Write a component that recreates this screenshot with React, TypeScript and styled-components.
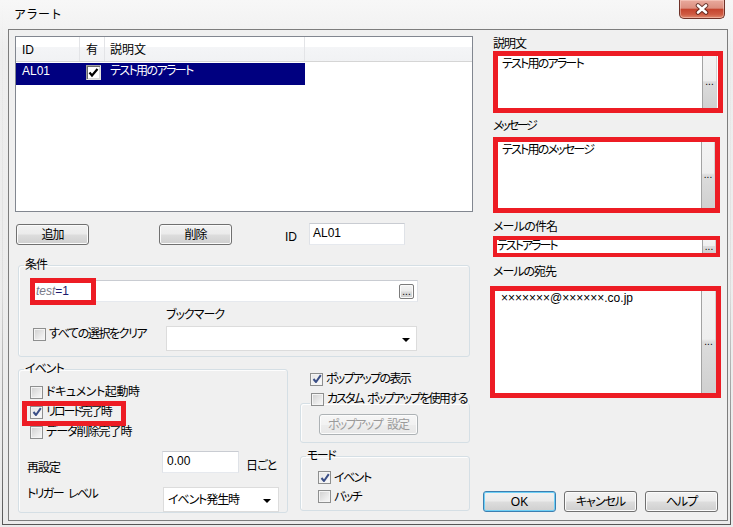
import React from "react";
import styled, { createGlobalStyle } from "styled-components";

const GlobalStyle = createGlobalStyle`
  * { box-sizing: border-box; }
  *::before, *::after { box-sizing: border-box; }
  html, body { margin: 0; padding: 0; }
  body {
    width: 733px; height: 527px; overflow: hidden;
    background: #ececec;
    font-family: "Liberation Sans", "Noto Sans CJK JP", sans-serif;
    font-size: 12px; line-height: 14px; color: #000;
    font-feature-settings: "palt" 1;
    letter-spacing: -1px;
  }
`;

const Window = styled.div`
  width: 733px; height: 527px;
  padding: 0 2px 2px 2px;
  background: linear-gradient(180deg, #f7f7f7 0%, #eeeeee 10%, #ebebeb 100%);
  display: flex;
`;

const Frame = styled.div`
  flex: 1;
  display: flex; flex-direction: column;
  padding: 0 2px 3px 5px;
  border: 1px solid transparent; border-top: 0;
  border-image: linear-gradient(180deg, rgba(90,90,90,0) 0%, rgba(90,90,90,0.1) 55%, rgba(60,60,60,0.85) 100%) 1;
`;

const TitleBar = styled.div`
  height: 29px; flex: 0 0 29px;
  display: flex; justify-content: space-between; align-items: flex-start;
`;

const TitleText = styled.div`
  padding: 7px 0 0 6px;
  font-family: "Noto Sans CJK JP", sans-serif;
  font-feature-settings: normal;
  letter-spacing: 0;
  font-size: 12px; line-height: 14px; color: #000;
`;

const CloseButton = styled.div`
  width: 46px; height: 19px; margin-right: 3px;
  border: 1px solid #6e3229; border-top: 0;
  border-radius: 0 0 5px 5px;
  background: linear-gradient(180deg, #e9aa9d 0%, #dc8f80 45%, #c5452f 52%, #cf5b43 80%, #e08a6e 100%);
  box-shadow: inset 0 0 0 1px rgba(255, 220, 210, 0.45);
  display: flex; align-items: center; justify-content: center;
`;

const Client = styled.div`
  height: 492px;
  border: 1px solid #7d7d7d;
  background: #f0f0f0;
  display: flex;
`;

const LeftCol = styled.div`
  width: 464px; flex: 0 0 464px;
  padding: 6px 0 0 6px;
  display: flex; flex-direction: column;
`;

const RightCol = styled.div`
  width: 244px; flex: 0 0 244px;
  margin-left: 10px;
  padding: 7px 0 8px 10px;
  display: flex; flex-direction: column;
`;

const Txt = styled.span<{ $ls?: number }>`
  letter-spacing: ${(p) => p.$ls ?? -1}px;
  white-space: pre;
`;

const Latin = styled.span`
  font-family: "Liberation Sans", sans-serif;
  letter-spacing: 0;
`;

/* ---------- list view ---------- */
const ListView = styled.div`
  height: 176px; flex: 0 0 176px;
  border: 1px solid #828790;
  background: #fff;
`;

const ListHeader = styled.div`
  display: grid;
  grid-template-columns: 64px 25px 200px 1fr;
  height: 25px;
  border-bottom: 1px solid #d5d5d5;
  background: linear-gradient(180deg, #ffffff 0%, #ffffff 42%, #f4f5f7 42%, #f1f2f4 100%);
`;

const HeaderCell = styled.div<{ $pl: number; $last?: boolean }>`
  padding-left: ${(p) => p.$pl}px;
  padding-top: 2px;
  display: flex; align-items: center;
  border-right: ${(p) => (p.$last ? "0" : "1px solid #e3e4e7")};
  letter-spacing: 0;
`;

const ListRow = styled.div`
  display: grid;
  grid-template-columns: 64px 25px 200px 1fr;
  height: 22px;
  margin-top: 1px;
`;

const RowCell = styled.div<{ $pl: number; $selected?: boolean }>`
  padding-left: ${(p) => p.$pl}px;
  padding-top: 1px;
  background: ${(p) => (p.$selected ? "#000080" : "transparent")};
  color: ${(p) => (p.$selected ? "#fff" : "#000")};
  display: flex; align-items: flex-start;
`;

const ClassicCheck = styled.div`
  width: 15px; height: 15px; margin-top: 1px;
  background: #fff;
  border: 1px solid;
  border-color: #a0a0a0 #e3e3e3 #e3e3e3 #a0a0a0;
  box-shadow: inset 1px 1px 0 #696969, inset -1px -1px 0 #d8d8d8;
  display: flex; align-items: center; justify-content: center;
`;

/* ---------- controls ---------- */
const PushButton = styled.button<{ $w?: number; $h?: number; $ml?: number; $mt?: number; $focus?: boolean }>`
  width: ${(p) => p.$w ?? 73}px;
  height: ${(p) => p.$h ?? 21}px;
  margin: ${(p) => p.$mt ?? 0}px 0 0 ${(p) => p.$ml ?? 0}px;
  padding: 0;
  flex: 0 0 auto;
  border: 1px solid ${(p) => (p.$focus ? "#3c7fb1" : "#707070")};
  border-radius: 3px;
  background: linear-gradient(180deg, #f2f2f2 0%, #ebebeb 48%, #dddddd 52%, #cfcfcf 100%);
  box-shadow: inset 0 0 0 1px ${(p) => (p.$focus ? "#6fd0f6" : "#fbfbfb")};
  font: inherit; color: #000;
  letter-spacing: -1px;
  display: flex; align-items: center; justify-content: center;
`;

const DisabledButton = styled(PushButton)`
  border-color: #adb2b5;
  background: linear-gradient(180deg, #f6f6f6 0%, #f2f2f2 50%, #ececec 52%, #e8e8e8 100%);
  box-shadow: inset 0 0 0 1px #fcfcfc;
  color: #9a9a9a;
`;

const TextBox = styled.div<{ $w: number; $h?: number; $pl?: number }>`
  width: ${(p) => p.$w}px;
  height: ${(p) => p.$h ?? 22}px;
  flex: 0 0 auto;
  padding: 2px 0 0 ${(p) => p.$pl ?? 3}px;
  background: #fff;
  border: 1px solid;
  border-color: #c9ccd2 #dfe2e7 #e6e9ee #dfe2e7;
  color: #000;
  letter-spacing: 0;
`;

const ComboBox = styled.div<{ $w: number; $h: number; $ar: number }>`
  width: ${(p) => p.$w}px;
  height: ${(p) => p.$h}px;
  flex: 0 0 auto;
  padding: 0 ${(p) => p.$ar}px 0 4px;
  background: #fff;
  border: 1px solid #dcdcdc;
  display: flex; align-items: center; justify-content: space-between;
`;

const ComboArrow = styled.span`
  width: 0; height: 0;
  margin-top: 3px;
  border-left: 4px solid transparent;
  border-right: 4px solid transparent;
  border-top: 4px solid #000;
`;

const CheckBoxBox = styled.span<{ $checked?: boolean }>`
  width: 13px; height: 13px; flex: 0 0 13px;
  border: 1px solid #8e8f8f;
  background: ${(p) =>
    p.$checked
      ? "linear-gradient(135deg, #e6e6e6 0%, #fbfbfb 100%)"
      : "linear-gradient(135deg, #cfcfcf 0%, #eeeeee 70%, #f7f7f7 100%)"};
  box-shadow: inset 0 0 0 1px #f4f4f4;
  display: inline-flex; align-items: center; justify-content: center;
`;

const CheckRow = styled.div<{ $h?: number; $ml?: number }>`
  height: ${(p) => p.$h ?? 14}px;
  margin-left: ${(p) => p.$ml ?? 0}px;
  display: flex; align-items: center; gap: 3px;
  white-space: nowrap;
`;

const Check = ({ checked }: { checked?: boolean }) => (
  <CheckBoxBox $checked={checked}>
    {checked && (
      <svg width="10" height="10" viewBox="0 0 10 10">
        <path d="M1.5 5 L4 8 L8.8 1.2" fill="none" stroke="#3a4e86" strokeWidth="2" strokeLinejoin="round" />
      </svg>
    )}
  </CheckBoxBox>
);

const Marked = styled.div<{ $t: number; $l: number; $w: number; $h: number; $bw?: number }>`
  position: relative;
  &::after {
    content: "";
    position: absolute;
    top: ${(p) => p.$t}px; left: ${(p) => p.$l}px;
    width: ${(p) => p.$w}px; height: ${(p) => p.$h}px;
    border: ${(p) => p.$bw ?? 5}px solid #ed1c24;
    pointer-events: none;
  }
`;

/* ---------- group boxes ---------- */
const GroupBox = styled.fieldset<{ $w: number; $mt?: number; $ml?: number }>`
  width: ${(p) => p.$w}px;
  flex: 0 0 auto;
  margin: ${(p) => p.$mt ?? 0}px 0 0 ${(p) => p.$ml ?? 0}px;
  padding: 0;
  min-inline-size: 0;
  border: 1px solid #d5dfe5;
  border-radius: 3px;
  box-shadow: inset 1px 1px 0 #fdfdfd;
`;

const Legend = styled.legend<{ $ml: number; $pb?: number }>`
  margin-left: ${(p) => p.$ml}px;
  padding: 0 1px ${(p) => p.$pb ?? 0}px 1px;
  line-height: 14px;
`;

const ButtonRow = styled.div`
  margin-top: 11px;
  display: flex; align-items: flex-start;
`;

const Label = styled.div<{ $w?: number; $ml?: number; $mt?: number }>`
  ${(p) => (p.$w ? `width: ${p.$w}px; flex: 0 0 ${p.$w}px;` : "")}
  margin: ${(p) => p.$mt ?? 0}px 0 0 ${(p) => p.$ml ?? 0}px;
  white-space: nowrap;
  line-height: 14px;
`;

const CondBody = styled.div`
  padding: 8px 0 5px 11px;
`;

const CondInput = styled.div`
  width: 388px; height: 22px;
  padding: 0 3px 0 5px;
  background: #fff;
  border: 1px solid;
  border-color: #c9ccd2 #dfe2e7 #e6e9ee #dfe2e7;
  display: flex; align-items: center; justify-content: space-between;
  font-family: "Liberation Sans", sans-serif;
  letter-spacing: 0;
`;

const Italic = styled.span`
  font-style: italic; color: #7a7a88;
`;

const Navy = styled.span`
  color: #1a1a6e;
`;

const SmallEllipsis = styled.div<{ $w: number; $h: number }>`
  width: ${(p) => p.$w}px; height: ${(p) => p.$h}px;
  border: 1px solid #7b7b7b; border-radius: 2px;
  background: linear-gradient(180deg, #f4f4f4 0%, #ebebeb 48%, #dcdcdc 52%, #cdcdcd 100%);
  box-shadow: inset 0 0 0 1px #fafafa;
  display: flex; align-items: flex-end; justify-content: center;
  font-size: 10px; line-height: 10px; color: #000;
  letter-spacing: 0;
  padding-bottom: 1px;
`;

const CondRow2 = styled.div`
  margin-top: 6px;
  display: flex; align-items: flex-end;
`;

const ClearItem = styled.div`
  width: 136px; flex: 0 0 136px;
  padding-left: 3px;
  margin-bottom: 10px;
`;

const BookmarkCol = styled.div`
  display: flex; flex-direction: column; gap: 4px;
`;

const Lower = styled.div`
  margin-top: 5px;
  display: flex; align-items: flex-start;
`;

const EventBody = styled.div`
  padding: 6px 0 0 8px;
`;

const FieldRow = styled.div<{ $mt: number }>`
  margin-top: ${(p) => p.$mt}px;
  display: flex; align-items: flex-start;
`;

const SubCol = styled.div`
  width: 170px; flex: 0 0 170px;
  margin-left: 12px;
  padding-top: 10px;
  display: flex; flex-direction: column;
`;

const CustomBody = styled.div`
  padding: 0 0 7px 18px;
`;

const ModeBody = styled.div`
  padding: 5px 0 4px 17px;
`;

/* ---------- right column ---------- */
const FieldLabel = styled.div<{ $mt?: number }>`
  margin-top: ${(p) => p.$mt ?? 0}px;
  line-height: 14px;
  white-space: nowrap;
`;

const RedField = styled.div<{ $w: number; $h: number; $bw: number; $mt: number; $ml?: number }>`
  width: ${(p) => p.$w}px; height: ${(p) => p.$h}px;
  flex: 0 0 auto;
  margin: ${(p) => p.$mt}px 0 0 ${(p) => p.$ml ?? 0}px;
  border: ${(p) => p.$bw}px solid #ed1c24;
  background: #fff;
  display: flex;
`;

const FieldText = styled.div<{ $pl: number; $pt: number; $lh?: number }>`
  flex: 1;
  padding: ${(p) => p.$pt}px 0 0 ${(p) => p.$pl}px;
  line-height: ${(p) => p.$lh ?? 14}px;
  white-space: nowrap; overflow: hidden;
`;

const TallEllipsis = styled.div<{ $w: number; $mr: number; $end?: boolean }>`
  width: ${(p) => p.$w}px; flex: 0 0 ${(p) => p.$w}px;
  margin-right: ${(p) => p.$mr}px;
  border-left: 1px solid #a3a3a3;
  border-right: 1px solid #d2d2d2;
  background: linear-gradient(180deg, #f3f3f3 0%, #eeeeee 47%, #dcdcdc 50%, #d0d0d0 100%);
  display: flex; justify-content: center;
  align-items: ${(p) => (p.$end ? "flex-end" : "center")};
  font-size: 10px; line-height: 10px;
  letter-spacing: 0;
  padding-bottom: ${(p) => (p.$end ? 1 : 0)}px;
`;

const DialogButtons = styled.div`
  margin: auto 0 0 -10px;
  display: flex; gap: 8px;
`;

const Gap = styled.span<{ $w: number }>`
  display: inline-block;
  width: ${(p) => p.$w}px;
`;

const CloseGlyph = () => (
  <svg width="16" height="12" viewBox="0 0 16 12">
    <path d="M4 2.5 L12 9.5 M12 2.5 L4 9.5" stroke="#4a1e17" strokeOpacity="0.75" strokeWidth="4.6" strokeLinecap="round" />
    <path d="M4 2.5 L12 9.5 M12 2.5 L4 9.5" stroke="#ffffff" strokeWidth="2.6" strokeLinecap="round" />
  </svg>
);

const ListCheckGlyph = () => (
  <svg width="11" height="11" viewBox="0 0 11 11">
    <path d="M1.5 5.5 L4 8.5 L9.5 2" fill="none" stroke="#000" strokeWidth="2.2" />
  </svg>
);

export default function App() {
  return (
    <>
      <GlobalStyle />
      <Window>
        <Frame>
          <TitleBar>
            <TitleText>アラート</TitleText>
            <CloseButton>
              <CloseGlyph />
            </CloseButton>
          </TitleBar>
          <Client>
            <LeftCol>
              <ListView>
                <ListHeader>
                  <HeaderCell $pl={6}>ID</HeaderCell>
                  <HeaderCell $pl={6}>有</HeaderCell>
                  <HeaderCell $pl={5}>説明文</HeaderCell>
                  <HeaderCell $pl={0} $last />
                </ListHeader>
                <ListRow>
                  <RowCell $pl={6} $selected>
                    <Latin>AL01</Latin>
                  </RowCell>
                  <RowCell $pl={6} $selected>
                    <ClassicCheck>
                      <ListCheckGlyph />
                    </ClassicCheck>
                  </RowCell>
                  <RowCell $pl={5} $selected>
                    <Txt $ls={-1.6}>テスト用のアラート</Txt>
                  </RowCell>
                  <RowCell $pl={0} />
                </ListRow>
              </ListView>

              <ButtonRow>
                <PushButton $ml={1} $mt={1}>追加</PushButton>
                <PushButton $ml={70} $mt={1}>削除</PushButton>
                <Label $w={24} $ml={53} $mt={7}>
                  <Latin>ID</Latin>
                </Label>
                <TextBox $w={96}>AL01</TextBox>
              </ButtonRow>

              <GroupBox $w={452} $mt={13} $ml={3}>
                <Legend $ml={5}>条件</Legend>
                <CondBody>
                  <Marked $t={-2} $l={0} $w={66} $h={27}>
                    <CondInput>
                      <span>
                        <Italic>test</Italic>
                        <Navy>=1</Navy>
                      </span>
                      <SmallEllipsis $w={15} $h={15}>...</SmallEllipsis>
                    </CondInput>
                  </Marked>
                  <CondRow2>
                    <ClearItem>
                      <CheckRow>
                        <Check />
                        <Txt $ls={-1.4}>すべての選択をクリア</Txt>
                      </CheckRow>
                    </ClearItem>
                    <BookmarkCol>
                      <Label>ブックマーク</Label>
                      <ComboBox $w={251} $h={25} $ar={6}>
                        <span />
                        <ComboArrow />
                      </ComboBox>
                    </BookmarkCol>
                  </CondRow2>
                </CondBody>
              </GroupBox>

              <Lower>
                <GroupBox $w={270} $ml={3}>
                  <Legend $ml={5}>イベント</Legend>
                  <EventBody>
                    <CheckRow $h={20} $ml={3}>
                      <Check />
                      <Txt $ls={-0.4}>ドキュメント起動時</Txt>
                    </CheckRow>
                    <Marked $t={-1} $l={-5} $w={104} $h={25}>
                      <CheckRow $h={20} $ml={3}>
                        <Check checked />
                        <Txt $ls={-2}>リロード完了時</Txt>
                      </CheckRow>
                    </Marked>
                    <CheckRow $h={20} $ml={3}>
                      <Check />
                      <Txt $ls={-1}>データ削除完了時</Txt>
                    </CheckRow>
                    <FieldRow $mt={9}>
                      <Label $w={135} $mt={10}>再設定</Label>
                      <TextBox $w={77} $pl={4}>0.00</TextBox>
                      <Label $ml={7} $mt={8}>日ごと</Label>
                    </FieldRow>
                    <FieldRow $mt={12}>
                      <Label $w={136} $mt={0}>
                        <Txt $ls={-1.6}>トリガー</Txt>
                        <Gap $w={5} />
                        <Txt $ls={-1.6}>レベル</Txt>
                      </Label>
                      <ComboBox $w={116} $h={25} $ar={7}>
                        <Txt $ls={-1.1}>イベント発生時</Txt>
                        <ComboArrow />
                      </ComboBox>
                    </FieldRow>
                  </EventBody>
                </GroupBox>

                <SubCol>
                  <CheckRow $ml={10}>
                    <Check checked />
                    <Txt $ls={-1.7}>ポップアップの表示</Txt>
                  </CheckRow>
                  <GroupBox $w={170} $mt={6}>
                    <Legend $ml={9} $pb={8}>
                      <CheckRow>
                        <Check />
                        <span>
                          <Txt $ls={-1.9}>カスタム</Txt>
                          <Gap $w={4} />
                          <Txt $ls={-1.9}>ポップアップを使用する</Txt>
                        </span>
                      </CheckRow>
                    </Legend>
                    <CustomBody>
                      <DisabledButton as="div" $w={99} $h={21}>
                        <Txt $ls={-1.6}>ポップアップ</Txt>
                        <Gap $w={5} />
                        <Txt $ls={-1}>設定</Txt>
                      </DisabledButton>
                    </CustomBody>
                  </GroupBox>
                  <GroupBox $w={170} $mt={6}>
                    <Legend $ml={5}>
                      <Txt $ls={-1.5}>モード</Txt>
                    </Legend>
                    <ModeBody>
                      <CheckRow $h={19}>
                        <Check checked />
                        <Txt $ls={-1.5}>イベント</Txt>
                      </CheckRow>
                      <CheckRow $h={19}>
                        <Check />
                        <Txt $ls={-1.5}>バッチ</Txt>
                      </CheckRow>
                    </ModeBody>
                  </GroupBox>
                </SubCol>
              </Lower>
            </LeftCol>

            <RightCol>
              <FieldLabel>説明文</FieldLabel>
              <RedField $w={230} $h={62} $bw={5} $mt={0}>
                <FieldText $pl={4} $pt={1}>
                  <Txt $ls={-1.8}>テスト用のアラート</Txt>
                </FieldText>
                <TallEllipsis $w={15} $mr={1}>...</TallEllipsis>
              </RedField>

              <FieldLabel $mt={6}>
                <Txt $ls={-2.5}>メッセージ</Txt>
              </FieldLabel>
              <RedField $w={227} $h={76} $bw={5} $mt={4}>
                <FieldText $pl={4} $pt={1}>
                  <Txt $ls={-1.8}>テスト用のメッセージ</Txt>
                </FieldText>
                <TallEllipsis $w={14} $mr={0}>...</TallEllipsis>
              </RedField>

              <FieldLabel $mt={7}>
                <Txt $ls={-0.8}>メールの件名</Txt>
              </FieldLabel>
              <RedField $w={227} $h={21} $bw={4} $mt={2}>
                <FieldText $pl={0} $pt={0} $lh={13}>
                  <Txt $ls={-2}>テストアラート</Txt>
                </FieldText>
                <TallEllipsis $w={14} $mr={0} $end>...</TallEllipsis>
              </RedField>

              <FieldLabel $mt={8}>
                <Txt $ls={-1}>メールの宛先</Txt>
              </FieldLabel>
              <RedField $w={231} $h={112} $bw={5} $mt={7} $ml={-3}>
                <FieldText $pl={6} $pt={0}>
                  <Latin>×××××××@××××××.co.jp</Latin>
                </FieldText>
                <TallEllipsis $w={15} $mr={0}>...</TallEllipsis>
              </RedField>

              <DialogButtons>
                <PushButton $focus>
                  <Latin>OK</Latin>
                </PushButton>
                <PushButton>キャンセル</PushButton>
                <PushButton>ヘルプ</PushButton>
              </DialogButtons>
            </RightCol>
          </Client>
        </Frame>
      </Window>
    </>
  );
}
